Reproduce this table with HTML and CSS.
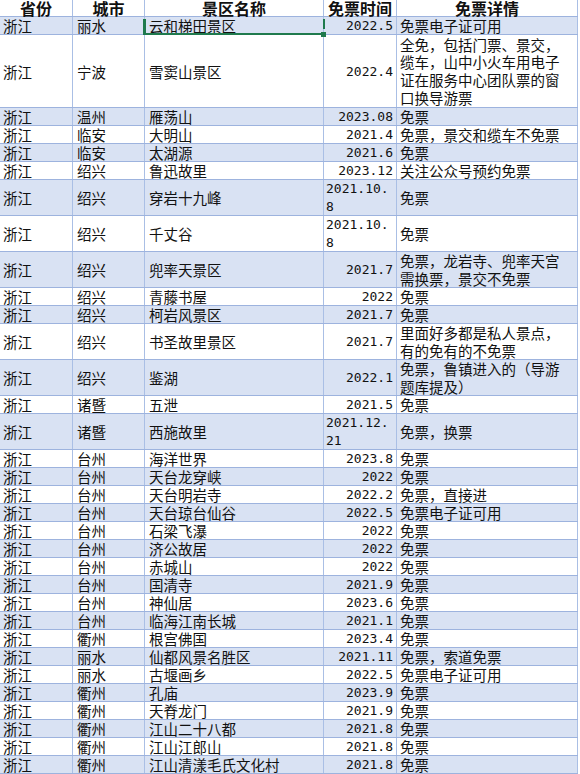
FILE: index.html
```html
<!DOCTYPE html>
<html lang="zh-CN">
<head>
<meta charset="utf-8">
<title>浙江免票景区</title>
<link rel="stylesheet" href="styles.css">
</head>
<body>
<div class="sheet">
  <div class="row head">
    <div class="c c1">省份</div><div class="c c2">城市</div><div class="c c3">景区名称</div><div class="c c4">免票时间</div><div class="c c5">免票详情</div>
  </div>
  <div class="row alt">
    <div class="c c1">浙江</div><div class="c c2">丽水</div><div class="c c3 sel">云和梯田景区<i class="sl"></i><i class="sb"></i><i class="sr"></i><i class="sh"></i></div><div class="c c4">2022.5</div><div class="c c5">免票电子证可用</div>
  </div>
  <div class="row r4">
    <div class="c c1">浙江</div><div class="c c2">宁波</div><div class="c c3">雪窦山景区</div><div class="c c4">2022.4</div><div class="c c5"><span class="ml">全免，包括门票、景交，<br>缆车，山中小火车用电子<br>证在服务中心团队票的窗<br>口换导游票</span></div>
  </div>
  <div class="row alt">
    <div class="c c1">浙江</div><div class="c c2">温州</div><div class="c c3">雁荡山</div><div class="c c4">2023.08</div><div class="c c5">免票</div>
  </div>
  <div class="row">
    <div class="c c1">浙江</div><div class="c c2">临安</div><div class="c c3">大明山</div><div class="c c4">2021.4</div><div class="c c5">免票，景交和缆车不免票</div>
  </div>
  <div class="row alt">
    <div class="c c1">浙江</div><div class="c c2">临安</div><div class="c c3">太湖源</div><div class="c c4">2021.6</div><div class="c c5">免票</div>
  </div>
  <div class="row">
    <div class="c c1">浙江</div><div class="c c2">绍兴</div><div class="c c3">鲁迅故里</div><div class="c c4">2023.12</div><div class="c c5">关注公众号预约免票</div>
  </div>
  <div class="row r2 alt">
    <div class="c c1">浙江</div><div class="c c2">绍兴</div><div class="c c3">穿岩十九峰</div><div class="c c4 wrap"><span class="ml">2021.10.<br>8</span></div><div class="c c5">免票</div>
  </div>
  <div class="row r2">
    <div class="c c1">浙江</div><div class="c c2">绍兴</div><div class="c c3">千丈谷</div><div class="c c4 wrap"><span class="ml">2021.10.<br>8</span></div><div class="c c5">免票</div>
  </div>
  <div class="row r2 alt">
    <div class="c c1">浙江</div><div class="c c2">绍兴</div><div class="c c3">兜率天景区</div><div class="c c4">2021.7</div><div class="c c5"><span class="ml">免票，龙岩寺、兜率天宫<br>需换票，景交不免票</span></div>
  </div>
  <div class="row">
    <div class="c c1">浙江</div><div class="c c2">绍兴</div><div class="c c3">青藤书屋</div><div class="c c4">2022</div><div class="c c5">免票</div>
  </div>
  <div class="row alt">
    <div class="c c1">浙江</div><div class="c c2">绍兴</div><div class="c c3">柯岩风景区</div><div class="c c4">2021.7</div><div class="c c5">免票</div>
  </div>
  <div class="row r2">
    <div class="c c1">浙江</div><div class="c c2">绍兴</div><div class="c c3">书圣故里景区</div><div class="c c4">2021.7</div><div class="c c5"><span class="ml">里面好多都是私人景点，<br>有的免有的不免票</span></div>
  </div>
  <div class="row r2 alt">
    <div class="c c1">浙江</div><div class="c c2">绍兴</div><div class="c c3">鉴湖</div><div class="c c4">2022.1</div><div class="c c5"><span class="ml">免票，鲁镇进入的（导游<br>题库提及）</span></div>
  </div>
  <div class="row">
    <div class="c c1">浙江</div><div class="c c2">诸暨</div><div class="c c3">五泄</div><div class="c c4">2021.5</div><div class="c c5">免票</div>
  </div>
  <div class="row r2 alt">
    <div class="c c1">浙江</div><div class="c c2">诸暨</div><div class="c c3">西施故里</div><div class="c c4 wrap"><span class="ml">2021.12.<br>21</span></div><div class="c c5">免票，换票</div>
  </div>
  <div class="row">
    <div class="c c1">浙江</div><div class="c c2">台州</div><div class="c c3">海洋世界</div><div class="c c4">2023.8</div><div class="c c5">免票</div>
  </div>
  <div class="row alt">
    <div class="c c1">浙江</div><div class="c c2">台州</div><div class="c c3">天台龙穿峡</div><div class="c c4">2022</div><div class="c c5">免票</div>
  </div>
  <div class="row">
    <div class="c c1">浙江</div><div class="c c2">台州</div><div class="c c3">天台明岩寺</div><div class="c c4">2022.2</div><div class="c c5">免票，直接进</div>
  </div>
  <div class="row alt">
    <div class="c c1">浙江</div><div class="c c2">台州</div><div class="c c3">天台琼台仙谷</div><div class="c c4">2022.5</div><div class="c c5">免票电子证可用</div>
  </div>
  <div class="row">
    <div class="c c1">浙江</div><div class="c c2">台州</div><div class="c c3">石梁飞瀑</div><div class="c c4">2022</div><div class="c c5">免票</div>
  </div>
  <div class="row alt">
    <div class="c c1">浙江</div><div class="c c2">台州</div><div class="c c3">济公故居</div><div class="c c4">2022</div><div class="c c5">免票</div>
  </div>
  <div class="row">
    <div class="c c1">浙江</div><div class="c c2">台州</div><div class="c c3">赤城山</div><div class="c c4">2022</div><div class="c c5">免票</div>
  </div>
  <div class="row alt">
    <div class="c c1">浙江</div><div class="c c2">台州</div><div class="c c3">国清寺</div><div class="c c4">2021.9</div><div class="c c5">免票</div>
  </div>
  <div class="row">
    <div class="c c1">浙江</div><div class="c c2">台州</div><div class="c c3">神仙居</div><div class="c c4">2023.6</div><div class="c c5">免票</div>
  </div>
  <div class="row alt">
    <div class="c c1">浙江</div><div class="c c2">台州</div><div class="c c3">临海江南长城</div><div class="c c4">2021.1</div><div class="c c5">免票</div>
  </div>
  <div class="row">
    <div class="c c1">浙江</div><div class="c c2">衢州</div><div class="c c3">根宫佛国</div><div class="c c4">2023.4</div><div class="c c5">免票</div>
  </div>
  <div class="row alt">
    <div class="c c1">浙江</div><div class="c c2">丽水</div><div class="c c3">仙都风景名胜区</div><div class="c c4">2021.11</div><div class="c c5">免票，索道免票</div>
  </div>
  <div class="row">
    <div class="c c1">浙江</div><div class="c c2">丽水</div><div class="c c3">古堰画乡</div><div class="c c4">2022.5</div><div class="c c5">免票电子证可用</div>
  </div>
  <div class="row alt">
    <div class="c c1">浙江</div><div class="c c2">衢州</div><div class="c c3">孔庙</div><div class="c c4">2023.9</div><div class="c c5">免票</div>
  </div>
  <div class="row">
    <div class="c c1">浙江</div><div class="c c2">衢州</div><div class="c c3">天脊龙门</div><div class="c c4">2021.9</div><div class="c c5">免票</div>
  </div>
  <div class="row alt">
    <div class="c c1">浙江</div><div class="c c2">衢州</div><div class="c c3">江山二十八都</div><div class="c c4">2021.8</div><div class="c c5">免票</div>
  </div>
  <div class="row">
    <div class="c c1">浙江</div><div class="c c2">衢州</div><div class="c c3">江山江郎山</div><div class="c c4">2021.8</div><div class="c c5">免票</div>
  </div>
  <div class="row alt">
    <div class="c c1">浙江</div><div class="c c2">衢州</div><div class="c c3">江山清漾毛氏文化村</div><div class="c c4">2021.8</div><div class="c c5">免票</div>
  </div>
</div>
</body>
</html>
```
FILE: styles.css
```css
html, body {
  margin: 0;
  padding: 0;
  background: #ffffff;
}

body {
  font-family: "Noto Sans CJK SC", sans-serif;
  color: #111111;
}

.sheet {
  width: 578px;
}

.row {
  display: flex;
  box-sizing: border-box;
  height: 18px;
  border-bottom: 1px solid #9db3de;
}

.row.alt {
  background: #d9e2f3;
}

.row.r2 {
  height: 36px;
}

.row.r4 {
  height: 73px;
}

.row.head {
  height: 17px;
  background: #ffffff;
}

.c {
  box-sizing: border-box;
  display: flex;
  align-items: center;
  padding: 0 3px;
  border-right: 1px solid #aabfe5;
  font-size: 14.5px;
  line-height: 17px;
  white-space: nowrap;
}

.c1 { width: 73px; }
.c2 { width: 72px; padding-left: 4px; }
.c3 { width: 179px; padding-left: 4px; }
.c4 {
  width: 73px;
  justify-content: flex-end;
  padding-right: 3px;
  font-family: "DejaVu Sans Mono", "Noto Sans CJK SC", monospace;
  font-size: 13px;
}
.c5 { width: 181px; padding-left: 3px; }

.c4.wrap {
  justify-content: flex-start;
  padding-left: 2px;
}

.ml {
  display: block;
  line-height: 17.5px;
}

.r4 .ml {
  line-height: 17.6px;
}

.head .c {
  justify-content: center;
  padding: 0;
  font-weight: bold;
  font-size: 16px;
  line-height: 17px;
  font-family: "Noto Sans CJK SC", sans-serif;
}

/* Excel-like active cell selection */
.c3.sel {
  position: relative;
}

.sel i {
  position: absolute;
  background: #1f7a4d;
  display: block;
}

.sel .sl {
  left: -2px;
  top: 2px;
  bottom: -1px;
  width: 3px;
}

.sel .sb {
  left: -2px;
  right: 1px;
  bottom: -1px;
  height: 2px;
}

.sel .sr {
  right: -2px;
  top: 2px;
  width: 2px;
  height: 10px;
}

.sel .sh {
  right: -3px;
  bottom: -3px;
  width: 5px;
  height: 5px;
}
```
